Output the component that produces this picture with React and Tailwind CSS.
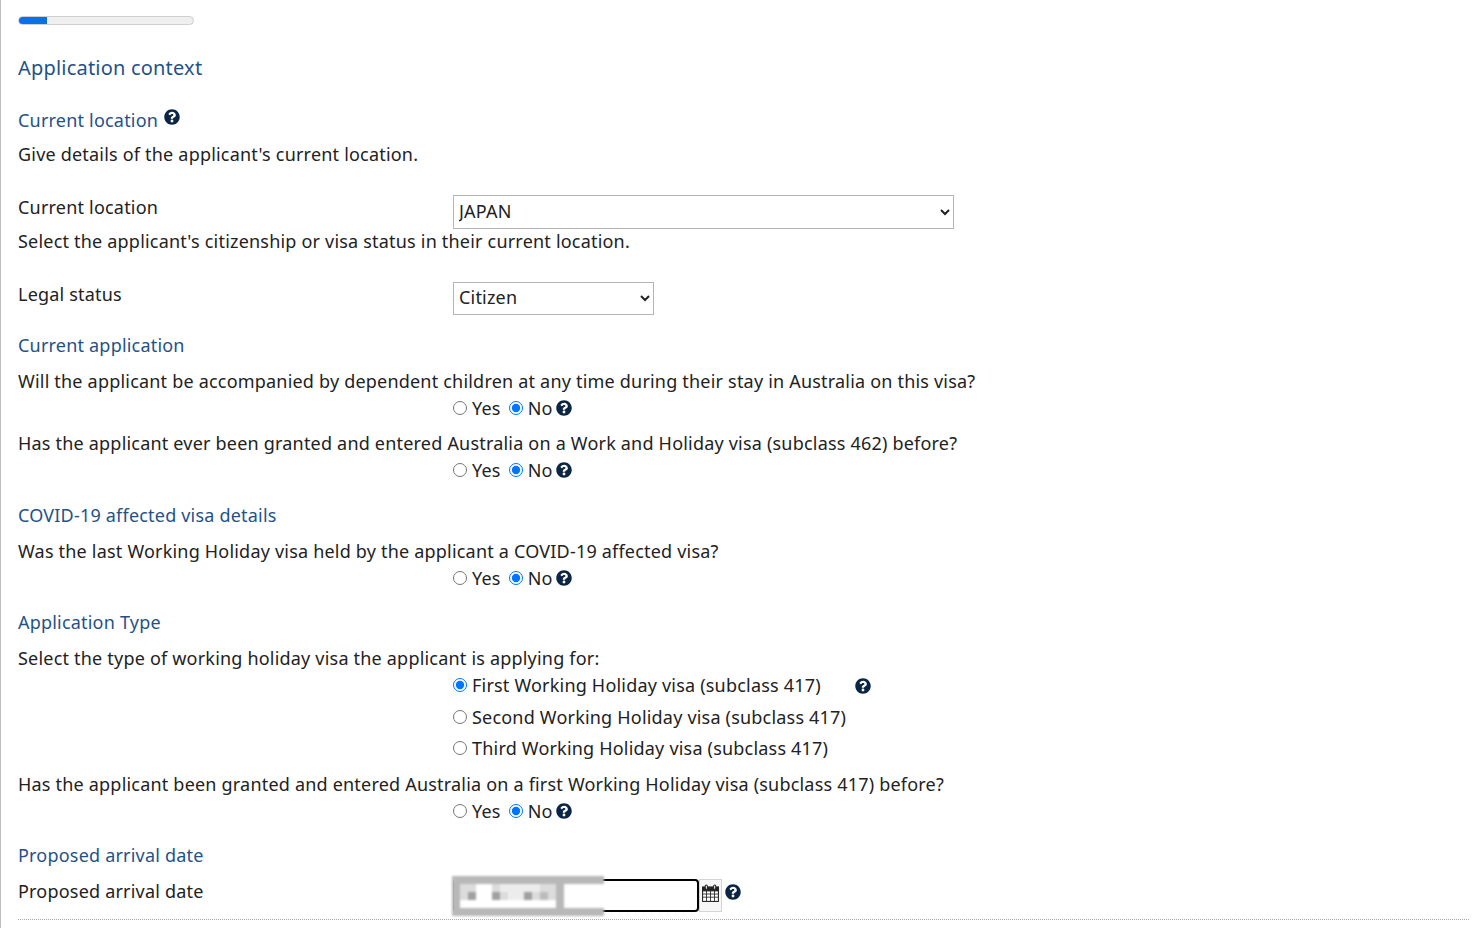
import React from 'react';
import { FaQuestionCircle } from 'react-icons/fa';

const Help = ({ className = '' }) => (
    <FaQuestionCircle className={`text-[#0b2545] w-[16px] h-[16px] shrink-0 ${className}`} />
);

const Heading = ({ children, className = '' }) => (
    <h3 className={`h-[27px] leading-[27px] text-[18px] text-[#1f5288] ${className}`}>{children}</h3>
);

const Line = ({ children, className = '' }) => (
    <p className={`h-[27px] leading-[27px] ${className}`}>{children}</p>
);

const Radio = ({ label, checked }) => (
    <label className="flex items-center">
        <input type="radio" defaultChecked={checked} className="w-[14px] h-[14px] m-0 mr-[5px] -mt-[2px]" />
        <span>{label}</span>
    </label>
);

const YesNo = () => {
    return (
        <div className="pl-[435px] h-[27px] flex items-center gap-[8px]">
            <Radio label="Yes" />
            <Radio label="No" checked />
            <Help className="-ml-[5px] -mt-[2px]" />
        </div>
    );
};

const CalendarIcon = () => (
    <svg viewBox="0 0 18 18" className="w-[19px] h-[19px]" fill="none" stroke="#222" strokeWidth="1">
        <rect x="1.5" y="3" width="15" height="13.5" fill="#fff" />
        <rect x="1.5" y="3" width="15" height="3.5" fill="#222" />
        <rect x="4" y="1" width="2" height="4" rx="1" fill="#fff" />
        <rect x="12" y="1" width="2" height="4" rx="1" fill="#fff" />
        <path d="M1.5 9.5h15M1.5 12.5h15M5.2 6.5v10M9 6.5v10M12.8 6.5v10" strokeWidth="0.8" />
    </svg>
);

// blurred-out date value in the screenshot, 8px blocks
const shades = {
    g: 'bg-[#b8b8b8]',
    l: 'bg-[#dcdcdc]',
    e: 'bg-[#ececec]',
    m: 'bg-[#a0a0a0]',
    s: 'bg-[#bcbcbc]',
    w: 'bg-white',
};
const mosaic = [
    'ggggggggggggggggggg',
    'gllwwleeeeellgwwwww',
    'glmwwmleemlslgwwwww',
    'gwwwwwwwwwwwwgwwwww',
    'ggggggggggggggggggg',
];

const App = () => {
    return (
        <div className="h-[928px] overflow-hidden bg-white border-l border-[#bdbdbd] pl-[17px] text-[18px] tracking-[0.2px] text-[#222] font-['Noto_Sans',sans-serif]">
            <div className="pt-[16px]">
                <div className="w-[176px] h-[9px] rounded-full bg-[#efefef] border border-[#cfcfcf] overflow-hidden">
                    <div className="w-[16%] h-full bg-[#0a6fe8]" />
                </div>
            </div>

            <h2 className="mt-[29px] h-[27px] leading-[27px] text-[20px] text-[#1f5288]">Application context</h2>

            <div className="mt-[26px] h-[27px] flex items-center">
                <Heading>Current location</Heading>
                <Help className="ml-[6px] -mt-[7px]" />
            </div>
            <Line className="mt-[7px]">Give details of the applicant's current location.</Line>

            <div className="mt-[26px] h-[27px] flex items-center">
                <span className="w-[435px] -mt-[1px]">Current location</span>
                <select defaultValue="JAPAN" className="w-[501px] h-[34px] mt-[9px] border border-[#b5b5b5] bg-white pl-[1px] pb-[3px]">
                    <option>JAPAN</option>
                </select>
            </div>
            <Line className="mt-[7px]">Select the applicant's citizenship or visa status in their current location.</Line>

            <div className="mt-[26px] h-[27px] flex items-center">
                <span className="w-[435px] -mt-[1px]">Legal status</span>
                <select defaultValue="Citizen" className="w-[201px] h-[33px] mt-[8px] border border-[#b5b5b5] bg-white pl-[1px] pb-[3px]">
                    <option>Citizen</option>
                </select>
            </div>

            <Heading className="mt-[24px]">Current application</Heading>
            <Line className="mt-[9px]">Will the applicant be accompanied by dependent children at any time during their stay in Australia on this visa?</Line>
            <YesNo />
            <Line className="mt-[8px]">Has the applicant ever been granted and entered Australia on a Work and Holiday visa (subclass 462) before?</Line>
            <YesNo />

            <Heading className="mt-[18px]">COVID-19 affected visa details</Heading>
            <Line className="mt-[9px]">Was the last Working Holiday visa held by the applicant a COVID-19 affected visa?</Line>
            <YesNo />

            <Heading className="mt-[17px]">Application Type</Heading>
            <Line className="mt-[9px]">Select the type of working holiday visa the applicant is applying for:</Line>
            <div className="pl-[435px] h-[27px] flex items-center">
                <Radio label="First Working Holiday visa (subclass 417)" checked />
                <Help className="ml-[34px]" />
            </div>
            <div className="pl-[435px] h-[27px] mt-[5px] flex items-center">
                <Radio label="Second Working Holiday visa (subclass 417)" />
            </div>
            <div className="pl-[435px] h-[27px] mt-[4px] flex items-center">
                <Radio label="Third Working Holiday visa (subclass 417)" />
            </div>
            <Line className="mt-[9px]">Has the applicant been granted and entered Australia on a first Working Holiday visa (subclass 417) before?</Line>
            <YesNo />

            <Heading className="mt-[17px]">Proposed arrival date</Heading>
            <div className="mt-[9px] h-[27px] flex items-center">
                <span className="w-[435px]">Proposed arrival date</span>
                <div className="relative flex items-center mt-[8px]">
                    <input type="text" className="w-[246px] h-[33px] border-2 border-black rounded-[4px] bg-white" />
                    <div className="absolute left-[-1px] top-[-3px] w-[152px] h-[40px] grid grid-cols-[repeat(19,8px)] grid-rows-[repeat(5,8px)] blur-[1px]">
                        {mosaic.join('').split('').map((c, i) => <div key={i} className={shades[c]} />)}
                    </div>
                    <span className="w-[23px] h-[33px] pb-[4px] flex items-center justify-center border border-[#d5d5d5] bg-[#f7f7f7]">
                        <CalendarIcon />
                    </span>
                    <Help className="ml-[3px] -mt-[8px]" />
                </div>
            </div>
            <div className="mt-[14px] border-t border-dotted border-[#aaa] mr-[6px]" />
        </div>
    );
};

export default App;
